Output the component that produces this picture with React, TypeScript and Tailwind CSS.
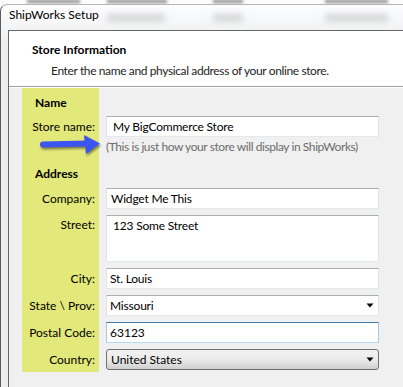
import React from 'react'

const field =
  'h-[21px] w-[273px] bg-white border border-[#e2e3ea] border-t-[#abadb3] border-b-[#e3e9ef] flex items-center text-[12px] tracking-[-0.2px] text-black'

function DownArrow() {
  return (
    <svg width="8" height="5" viewBox="0 0 8 5" className="mr-[4px]">
      <path d="M0.5 0.5h7L4 4.5z" fill="#000" />
    </svg>
  )
}

function Label({ text }: { text: string }) {
  return (
    <div className="w-[77px] bg-[#e2e87a] text-right pr-[4px] text-[12px] text-black leading-[16px] flex items-center justify-end">
      {text}
    </div>
  )
}

export default function App() {
  return (
    <div className="w-[403px] h-[387px] overflow-hidden bg-[#fbfbfb] flex flex-col [font-family:Lato,'Open_Sans',sans-serif]">
      {/* blurred stuff behind the window */}
      <div className="h-[4px] flex items-start overflow-hidden">
        <div className="ml-[27px] w-[53px] h-[3px] bg-[#8a8a8a] blur-[1.5px]" />
        <div className="ml-[27px] w-[60px] h-[3px] bg-[#8a8a8a] blur-[1.5px]" />
        <div className="ml-[46px] w-[30px] h-[3px] bg-[#8a8a8a] blur-[1.5px]" />
        <div className="ml-[82px] w-[63px] h-[3px] bg-[#8a8a8a] blur-[1.5px]" />
      </div>

      {/* window */}
      <div className="flex-1 flex flex-col border-l border-t border-l-[#5a5a5a] border-t-[#b5b5b5] rounded-tl-[7px] bg-gradient-to-b from-[#fdfdfe] to-[#eceef1] to-[40px]">
        <div className="h-[25px] flex items-start pl-[8px] pt-[2px] overflow-hidden">
          <span className="text-[12px] leading-[16px] text-black w-[98px]">ShipWorks Setup</span>
          <div className="mt-[7px] w-[58px] h-[8px] bg-[#d6d6d6] blur-[3px]" />
          <div className="mt-[7px] ml-[48px] w-[30px] h-[8px] bg-[#d6d6d6] blur-[3px]" />
          <div className="mt-[7px] ml-[82px] w-[63px] h-[8px] bg-[#d6d6d6] blur-[3px]" />
        </div>

        <div className="flex-1 ml-[7px] border-l border-t border-[#666] bg-[#f0f0f0] flex flex-col">
          {/* header */}
          <div className="h-[56px] bg-white border-b border-[#a0a0a0] pl-[23px] pt-[11px]">
            <div className="text-[12px] leading-[16px] font-bold text-black">Store Information</div>
            <div className="mt-[5px] ml-[19px] text-[12px] leading-[16px] tracking-[-0.38px] text-[#1e1e1e]">
              Enter the name and physical address of your online store.
            </div>
          </div>

          {/* body */}
          <div className="relative border-t border-white pl-[13px] flex flex-col">
            {/* Name heading */}
            <div className="flex h-[28px]">
              <div className="w-[77px] bg-[#e2e87a] pl-[13px] pt-[7px] text-[12px] leading-[16px] font-bold text-black">Name</div>
            </div>

            <div className="flex h-[21px]">
              <Label text="Store name:" />
              <div className="pl-[7px]">
                <div className={field + ' pl-[6px]'}>My BigCommerce Store</div>
              </div>
            </div>

            <div className="flex h-[23px]">
              <div className="w-[77px] bg-[#e2e87a]" />
              <div className="pl-[7px] pt-[2px] text-[12px] leading-[16px] tracking-[-0.42px] text-[#6d6d6d]">
                (This is just how your store will display in ShipWorks)
              </div>
            </div>

            {/* Address heading */}
            <div className="flex h-[28px]">
              <div className="w-[77px] bg-[#e2e87a] pl-[13px] pt-[6px] text-[12px] leading-[16px] font-bold text-black">Address</div>
            </div>

            <div className="flex h-[27px] items-start">
              <div className="self-stretch w-[77px] bg-[#e2e87a] text-right pr-[4px] pt-[3px] text-[12px] leading-[16px] text-black">Company:</div>
              <div className="pl-[7px]">
                <div className={field + ' pl-[4px]'}>Widget Me This</div>
              </div>
            </div>

            <div className="flex h-[53px] items-start">
              <div className="self-stretch w-[77px] bg-[#e2e87a] text-right pr-[4px] pt-[2px] text-[12px] leading-[16px] text-black">Street:</div>
              <div className="pl-[7px]">
                <div className="h-[47px] w-[273px] bg-white border border-[#e2e3ea] border-t-[#abadb3] border-b-[#e3e9ef] pl-[6px] pt-[2px] text-[12px] leading-[16px] tracking-[-0.2px] text-black">
                  123 Some Street
                </div>
              </div>
            </div>

            <div className="flex h-[27px] items-start">
              <div className="self-stretch w-[77px] bg-[#e2e87a] text-right pr-[4px] pt-[3px] text-[12px] leading-[16px] text-black">City:</div>
              <div className="pl-[7px]">
                <div className={field + ' pl-[3px]'}>St. Louis</div>
              </div>
            </div>

            <div className="flex h-[27px] items-start">
              <div className="self-stretch w-[77px] bg-[#e2e87a] text-right pr-[4px] pt-[3px] text-[12px] leading-[16px] text-black">State \ Prov:</div>
              <div className="pl-[7px]">
                <div className={field + ' pl-[3px] justify-between'}>
                  <span>Missouri</span>
                  <DownArrow />
                </div>
              </div>
            </div>

            <div className="flex h-[27px] items-start">
              <div className="self-stretch w-[77px] bg-[#e2e87a] text-right pr-[4px] pt-[3px] text-[12px] leading-[16px] text-black">Postal Code:</div>
              <div className="pl-[7px]">
                <div className="h-[21px] w-[273px] bg-white border border-[#a4c9e3] border-t-[#3d7bad] border-b-[#b7d9ed] flex items-center pl-[3px] text-[12px] text-black">
                  63123
                </div>
              </div>
            </div>

            <div className="flex h-[23px] items-start">
              <div className="self-stretch w-[77px] bg-[#e2e87a] text-right pr-[4px] pt-[3px] text-[12px] leading-[16px] text-black">Country:</div>
              <div className="pl-[7px]">
                <div className="h-[21px] w-[273px] rounded-[3px] border border-[#707070] bg-gradient-to-b from-[#f2f2f2] via-[#ebebeb] to-[#cfcfcf] flex items-center justify-between pl-[4px] text-[12px] text-black">
                  <span>United States</span>
                  <DownArrow />
                </div>
              </div>
            </div>

            {/* annotation arrow */}
            <svg
              width="66"
              height="28"
              viewBox="0 0 66 28"
              className="absolute left-[29px] top-[44px] drop-shadow-[1px_2px_1px_rgba(0,0,0,0.45)]"
            >
              <line x1="5" y1="12.5" x2="49" y2="11.5" stroke="#3c55f0" strokeWidth="6" strokeLinecap="round" />
              <path d="M46 3 L62 11.5 L48 22 Z" fill="#3c55f0" />
            </svg>
          </div>
        </div>
      </div>
    </div>
  )
}
